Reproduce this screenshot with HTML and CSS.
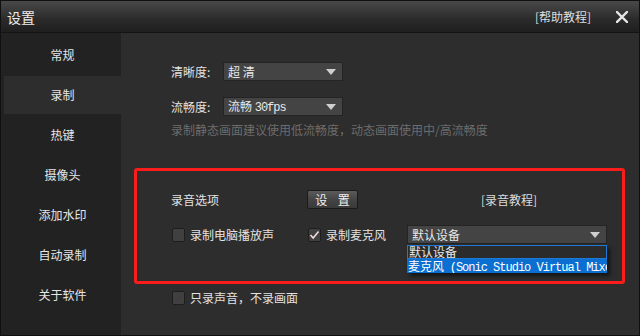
FILE: index.html
```html
<!DOCTYPE html>
<html lang="zh-CN">

<head>
    <meta charset="UTF-8">
    <title>设置</title>
    <link rel="stylesheet" href="styles.css">
</head>

<body>
    <!-- window 设置窗口 -->
    <div class="window">
        <!-- titleBar 标题栏 -->
        <div class="titleBar">
            <span class="title">设置</span>
            <span class="helpLink">[帮助教程]</span>
            <span class="closeBtn">
                <svg width="12" height="12" viewBox="0 0 12 12">
                    <path d="M1 1 L11 11 M11 1 L1 11" stroke="#e6e6e6" stroke-width="2.4" stroke-linecap="square" fill="none"/>
                </svg>
            </span>
        </div>
        <div class="bodyNode">
            <!-- sideNode 左侧菜单 -->
            <ul class="sideNode">
                <li>常规</li>
                <li class="active">录制</li>
                <li>热键</li>
                <li>摄像头</li>
                <li>添加水印</li>
                <li>自动录制</li>
                <li>关于软件</li>
            </ul>
            <!-- mainNode 右侧内容 -->
            <div class="mainNode">
                <div class="formRow">
                    <span class="label">清晰度:</span>
                    <div class="selectNode">
                        <span>超 清</span>
                        <i class="arrow"></i>
                    </div>
                </div>
                <div class="formRow second">
                    <span class="label">流畅度:</span>
                    <div class="selectNode">
                        <span>流畅 <em class="mono">30fps</em></span>
                        <i class="arrow"></i>
                    </div>
                </div>
                <p class="hint">录制静态画面建议使用低流畅度，动态画面使用中/高流畅度</p>

                <!-- audioBox 录音选项 -->
                <div class="audioBox">
                    <div class="boxRow">
                        <span>录音选项</span>
                        <span><button class="btnNode">设 置</button></span>
                        <span class="tutorial">[录音教程]</span>
                    </div>
                    <div class="boxRow second">
                        <label class="checkNode"><i class="box"></i>录制电脑播放声</label>
                        <label class="checkNode"><i class="box">
                            <svg width="11" height="10" viewBox="0 0 11 10">
                                <path d="M1.5 5 L4.2 8 L9.5 1.5" stroke="#f1dada" stroke-width="1.6" fill="none"/>
                            </svg>
                        </i>录制麦克风</label>
                        <div class="deviceWrap">
                            <div class="selectNode wide">
                                <span>默认设备</span>
                                <i class="arrow"></i>
                            </div>
                            <!-- 下拉列表 -->
                            <ul class="dropList">
                                <li class="focus">默认设备</li>
                                <li class="picked">麦克风 <em class="mono">(Sonic Studio Virtual Mixer)</em></li>
                            </ul>
                        </div>
                    </div>
                </div>

                <label class="checkNode onlyAudio"><i class="box"></i>只录声音，不录画面</label>
            </div>
        </div>
    </div>
</body>

</html>
```

FILE: styles.css
```css
* {
    margin: 0;
    padding: 0;
    list-style: none;
    box-sizing: border-box;
}

body {
    background: #2d2d2d;
    font-family: "Noto Sans CJK SC", "Liberation Sans", sans-serif;
    font-size: 12px;
    color: #e2e2e2;
}

.mono {
    font-style: normal;
    font-family: "Liberation Mono", "Noto Sans CJK SC", monospace;
    font-size: 12px;
    letter-spacing: -1px;
}

.window {
    display: flex;
    flex-direction: column;
    width: 640px;
    height: 336px;
    border: 1px solid #101010;
    background: #2d2d2d;
}

.titleBar {
    display: flex;
    align-items: center;
    height: 32px;
    padding: 0 10px 0 6px;
    border-bottom: 1px solid #141414;
    background: linear-gradient(#494949, #2a2a2a 60%, #1f1f1f);
}

.titleBar .title {
    flex: 1;
    font-size: 14px;
    line-height: 20px;
    color: #ececec;
}

.titleBar .helpLink {
    margin-right: 25px;
    line-height: 16px;
    color: #dedede;
}

.titleBar .closeBtn {
    display: flex;
    width: 12px;
    height: 12px;
    margin-right: 1px;
}

.bodyNode {
    display: flex;
    flex: 1;
}

.sideNode {
    width: 120px;
    padding-top: 3px;
    background: #222;
}

.sideNode li {
    height: 38px;
    margin: 0 0 2px 3px;
    line-height: 38px;
    text-align: center;
    color: #e6e6e6;
}

.sideNode li.active {
    background: #2d2d2d;
}

.mainNode {
    flex: 1;
    padding: 29px 0 0 13px;
}

.formRow {
    display: flex;
    align-items: center;
    height: 19px;
    margin-left: 37px;
}

.formRow.second {
    margin-top: 16px;
}

.formRow .label {
    width: 52px;
    line-height: 16px;
}

.selectNode {
    display: flex;
    align-items: center;
    width: 120px;
    height: 19px;
    padding: 0 6px 0 4px;
    border: 1px solid #242424;
    background: #444;
    color: #e8e8e8;
}

.selectNode span {
    flex: 1;
    line-height: 16px;
    white-space: nowrap;
}

.selectNode .arrow {
    width: 0;
    height: 0;
    border-left: 5px solid transparent;
    border-right: 5px solid transparent;
    border-top: 6px solid #cfcfcf;
}

.selectNode.wide {
    width: 200px;
}

.hint {
    margin: 5px 0 0 37px;
    line-height: 18px;
    color: #6c6c6c;
}

.audioBox {
    width: 491px;
    margin-top: 29px;
    padding: 19px 0 37px 34px;
    border: 3px solid #fb1c1c;
    border-radius: 3px;
}

.boxRow {
    display: grid;
    grid-template-columns: 136px 100px 200px;
    align-items: center;
    height: 19px;
    line-height: 16px;
}

.boxRow.second {
    margin-top: 16px;
}

.boxRow .tutorial {
    padding-left: 74px;
    color: #dcdcdc;
}

.btnNode {
    display: block;
    width: 51px;
    height: 19px;
    border: 1px solid #1b1b1b;
    border-radius: 2px;
    background: linear-gradient(#5b5b5b, #454545 50%, #393939);
    font-family: inherit;
    font-size: 12px;
    line-height: 16px;
    letter-spacing: 4px;
    text-indent: 4px;
    color: #f0f0f0;
}

.checkNode {
    display: flex;
    align-items: center;
    line-height: 16px;
}

.checkNode .box {
    display: flex;
    align-items: center;
    justify-content: center;
    width: 13px;
    height: 14px;
    margin: 0 5px 0 1px;
    border: 1px solid #1e1e1e;
    border-radius: 2px;
    background: #404040;
}

.onlyAudio {
    height: 14px;
    margin: 7px 0 0 37px;
}

.deviceWrap {
    position: relative;
}

.dropList {
    position: absolute;
    left: 0;
    top: 20px;
    width: 200px;
    background: #2b2b2b;
    box-shadow: 3px 3px 4px rgba(0, 0, 0, .55);
    z-index: 2;
}

.dropList li {
    height: 14px;
    padding-left: 1px;
    line-height: 14px;
    white-space: nowrap;
    overflow: hidden;
}

.dropList .focus {
    line-height: 12px;
    border: 1px solid #1f7ad4;
    color: #e6e6e6;
}

.dropList .picked {
    background: #0a6fd0;
    color: #fff;
}

.dropList .picked .mono {
    margin-left: 3px;
}
```
